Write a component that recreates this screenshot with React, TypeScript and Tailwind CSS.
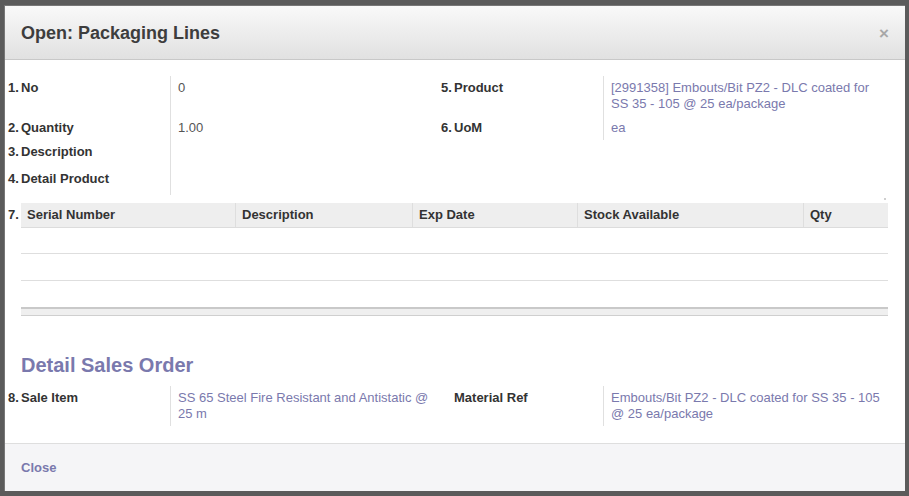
import React from "react";

const font = { fontFamily: '"Liberation Sans", Arial, sans-serif' };

type Field = { num?: string; label: string; value?: React.ReactNode; h: string; link?: boolean };

const Label = ({ num, label }: { num?: string; label: string }) => (
  <div className="flex font-bold text-[13px] leading-4 text-[#333]">
    <span className="w-[13px] shrink-0 -ml-[13px]">{num}</span>
    <span>{label}</span>
  </div>
);

const FieldRow = ({ f, labelW }: { f: Field; labelW: string }) => (
  <div className={`flex ${f.h}`}>
    <div className={`${labelW} shrink-0 pt-[4px] pl-[13px]`}>
      <Label num={f.num} label={f.label} />
    </div>
    <div
      className={`flex-1 border-l border-[#e0e0e0] pl-[7px] pt-[4px] text-[13px] leading-4 ${
        f.link ? "text-[#7a79ad]" : "text-[#555]"
      }`}
    >
      {f.value}
    </div>
  </div>
);

const leftFields: Field[] = [
  { num: "1.", label: "No", value: "0", h: "h-[40px]" },
  { num: "2.", label: "Quantity", value: "1.00", h: "h-[24px]" },
  { num: "3.", label: "Description", h: "h-[27px]" },
  { num: "4.", label: "Detail Product", h: "h-[28px]" },
];

const rightFields: Field[] = [
  {
    num: "5.",
    label: "Product",
    value: (
      <>
        [2991358] Embouts/Bit PZ2 - DLC coated for
        <br />
        SS 35 - 105 @ 25 ea/package
      </>
    ),
    h: "h-[40px]",
    link: true,
  },
  { num: "6.", label: "UoM", value: "ea", h: "h-[24px]", link: true },
];

const columns = [
  { name: "Serial Number", w: "w-[214px]" },
  { name: "Description", w: "w-[177px]" },
  { name: "Exp Date", w: "w-[165px]" },
  { name: "Stock Available", w: "w-[226px]" },
  { name: "Qty", w: "flex-1" },
];

export default function App() {
  return (
    <div className="w-[909px] h-[496px] bg-[#5b5b5b] pt-[5px] pl-[4px] overflow-hidden" style={font}>
      <div className="w-[901px] h-[486px] bg-white flex flex-col border-l border-t border-[#777]">
        {/* header */}
        <div className="h-[54px] shrink-0 flex items-center justify-between px-[16px] bg-gradient-to-b from-[#f9f9f9] to-[#e1e1e1] border-b border-[#c8c8c8]">
          <h2 className="text-[18px] font-bold text-[#3d3d3d] pt-[1px]">Open: Packaging Lines</h2>
          <span className="text-[17px] font-bold text-[#a8a8a8] leading-none pt-[1px]">×</span>
        </div>

        {/* body */}
        <div className="flex-1 relative">
          <div className="flex pt-[16px]">
            <div className="w-[436px] pl-[3px]">
              {leftFields.map((f) => (
                <FieldRow key={f.label} f={f} labelW="w-[162px]" />
              ))}
            </div>
            <div className="flex-1 pr-[14px]">
              {rightFields.map((f) => (
                <FieldRow key={f.label} f={f} labelW="w-[162px]" />
              ))}
            </div>
          </div>

          <div className="absolute left-[879px] top-[138px] w-[2px] h-[2px] bg-[#cfcfcf]" />

          {/* grid */}
          <div className="flex mt-[8px] pl-[3px]">
            <span className="w-[13px] shrink-0 pt-[4px] font-bold text-[13px] leading-4 text-[#333]">7.</span>
            <div className="w-[867px]">
              <div className="flex h-[25px] bg-[#eeeeee] border-b border-[#dcdcdc]">
                {columns.map((c, i) => (
                  <div
                    key={c.name}
                    className={`${c.w} pl-[6px] flex items-center font-bold text-[13px] text-[#333] ${
                      i > 0 ? "border-l border-[#dedede]" : ""
                    }`}
                  >
                    {c.name}
                  </div>
                ))}
              </div>
              <div className="h-[26px] border-b border-[#dedede]" />
              <div className="h-[27px] border-b border-[#dedede]" />
              <div className="h-[26px]" />
              <div className="h-[9px] bg-[#efefef] border-t-2 border-b border-[#c9c9c9] border-b-[#cfcfcf]" />
            </div>
          </div>

          {/* detail sales order */}
          <h3 className="mt-[37px] pl-[16px] text-[20px] font-bold leading-6 text-[#7a79ad]">Detail Sales Order</h3>
          <div className="flex mt-[9px]">
            <div className="w-[436px] pl-[3px]">
              <FieldRow
                f={{
                  num: "8.",
                  label: "Sale Item",
                  value: (
                    <>
                      SS 65 Steel Fire Resistant and Antistatic @
                      <br />
                      25 m
                    </>
                  ),
                  h: "h-[40px]",
                  link: true,
                }}
                labelW="w-[162px]"
              />
            </div>
            <div className="flex-1 pr-[14px]">
              <FieldRow
                f={{
                  label: "Material Ref",
                  value: (
                    <>
                      Embouts/Bit PZ2 - DLC coated for SS 35 - 105
                      <br />
                      @ 25 ea/package
                    </>
                  ),
                  h: "h-[40px]",
                  link: true,
                }}
                labelW="w-[162px]"
              />
            </div>
          </div>
        </div>

        {/* footer */}
        <div className="h-[48px] shrink-0 bg-[#f5f5f7] border-t border-[#dedede] flex items-center pl-[16px]">
          <span className="text-[13px] font-bold text-[#7a79ad]">Close</span>
        </div>
      </div>
    </div>
  );
}
